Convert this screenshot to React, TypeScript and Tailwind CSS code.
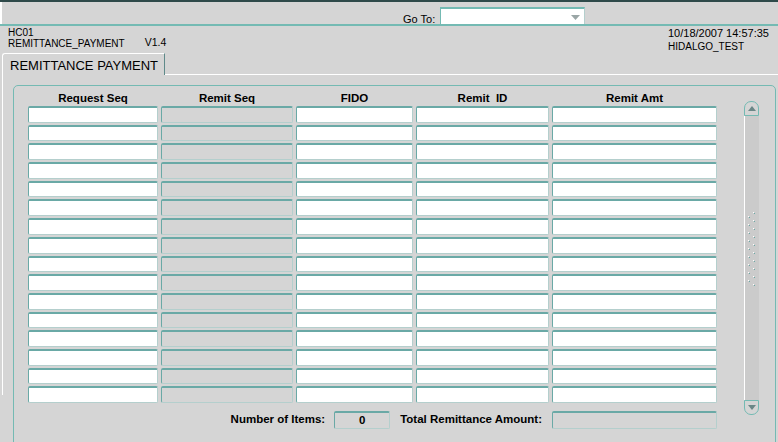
import React from "react";

// Colonnes du bloc
const cols = [
  { title: "Request Seq", w: "w-[130px]", gray: false },
  { title: "Remit Seq", w: "w-[132px]", gray: true },
  { title: "FIDO", w: "w-[117px]", gray: false },
  { title: "Remit  ID", w: "w-[133px]", gray: false },
  { title: "Remit Amt", w: "w-[165px]", gray: false },
];
const ROWS = 16;

const Field = ({ gray }: { gray?: boolean }) => (
  <div
    className={`h-full rounded-[2px] border border-[#b4cfcd] border-t-2 border-t-[#6aa9a6] border-l-[#6aa9a6] ${
      gray ? "bg-[#d5d5d5]" : "bg-white"
    }`}
  />
);

const Grip = () => (
  <svg width="12" height="76" viewBox="0 0 12 76">
    {Array.from({ length: 10 }).map((_, i) => (
      <g key={i}>
        <rect x="7" y={i * 8} width="1" height="1" fill="#ffffff" />
        <rect x="8" y={i * 8 + 1} width="1" height="1" fill="#6aa9a6" />
        <rect x="2" y={i * 8 + 4} width="1" height="1" fill="#ffffff" />
        <rect x="3" y={i * 8 + 5} width="1" height="1" fill="#6aa9a6" />
      </g>
    ))}
  </svg>
);

const ScrollBar = () => (
  <div className="mt-[9px] flex h-[314px] w-[15px] flex-col">
    <div className="flex h-[15px] items-center justify-center rounded-t-[7px] border border-[#74bab3]">
      <svg width="8" height="5" viewBox="0 0 8 5"><path d="M0 5 L4 0 L8 5 Z" fill="#6b8787" /></svg>
    </div>
    <div className="flex flex-1 items-start border-l border-white bg-[#cbcbcb] pl-[1px] pt-[96px]">
      <Grip />
    </div>
    <div className="flex h-[15px] items-center justify-center rounded-b-[7px] border border-[#74bab3]">
      <svg width="8" height="5" viewBox="0 0 8 5"><path d="M0 0 L8 0 L4 5 Z" fill="#6b8787" /></svg>
    </div>
  </div>
);

export default function App() {
  return (
    <div className="h-[442px] w-[778px] overflow-hidden bg-[#d5d5d5] text-black" style={{ fontFamily: '"Liberation Sans", Arial, sans-serif' }}>
      {/* barre du haut */}
      <div className="h-[2px] bg-[#2f4a4a]" />
      <div className="flex h-[22px] items-start overflow-hidden border-l-2 border-white">
        <span className="ml-[401px] mt-[11px] text-[11px] leading-[13px]">Go To:</span>
        <div className="ml-[5px] mt-[5px] flex h-[22px] w-[145px] justify-end border border-[#b4cfcd] border-t-2 border-t-[#74bab3] border-l-[#74bab3] bg-white pr-[4px] pt-[6px]">
          <svg width="9" height="5" viewBox="0 0 9 5"><path d="M0 0 L9 0 L4.5 5 Z" fill="#9aa6a6" /></svg>
        </div>
      </div>
      <div className="h-[2px] bg-[#74bab3]" />

      {/* entête */}
      <div className="flex h-[27px] text-[10px] leading-[11px]">
        <div className="ml-[8px] pt-[1px]">
          <div>HC01</div>
          <div>REMITTANCE_PAYMENT</div>
        </div>
        <div className="ml-[20px] pt-[11px] text-[10.5px]">V1.4</div>
        <div className="ml-auto mr-[8px] w-[102px] pt-[1px] leading-[13px]">
          <div className="text-[11px]">10/18/2007 14:57:35</div>
          <div>HIDALGO_TEST</div>
        </div>
      </div>

      {/* onglet */}
      <div className="flex h-[22px] items-end">
        <div className="ml-[2px] h-[22px] w-[163px] rounded-tl-[3px] border-l border-t border-r border-white border-r-[#5f8a8a] pl-[7px] pt-[2px] text-[13px] leading-[20px]">
          REMITTANCE PAYMENT
        </div>
        <div className="h-[2px] flex-1 border-b border-white" />
      </div>

      {/* page */}
      <div className="ml-[2px] h-[320px] border-l border-white pt-[10px] pl-[10px] pr-[2px]">
        <div className="h-[400px] rounded-t-[5px] border border-[#74bab3]">
          <div className="flex pl-[14px] pt-[6px]">
            <div className="flex flex-col">
              <div className="flex h-[14px] gap-[3px] text-[11.5px] font-bold leading-[13px]">
                {cols.map((c) => (
                  <div key={c.title} className={`${c.w} whitespace-pre text-center`}>{c.title}</div>
                ))}
              </div>
              <div className="flex h-[297px] gap-[3px]">
                {cols.map((c) => (
                  <div key={c.title} className={`${c.w} grid grid-rows-[repeat(16,minmax(0,1fr))] gap-y-[2px]`}>
                    {Array.from({ length: ROWS }).map((_, i) => (
                      <Field key={i} gray={c.gray} />
                    ))}
                  </div>
                ))}
              </div>
              <div className="mt-[8px] flex h-[18px] items-center justify-end text-[11.5px] font-bold">
                <span>Number of Items:</span>
                <div className="ml-[9px] flex h-[18px] w-[56px] items-center justify-center rounded-[2px] border border-[#b4cfcd] border-t-2 border-t-[#6aa9a6] border-l-[#6aa9a6] bg-[#d5d5d5]">0</div>
                <span className="ml-[10px]">Total Remittance Amount:</span>
                <div className="ml-[10px] h-[18px] w-[165px] rounded-[2px] border border-[#b4cfcd] border-t-2 border-t-[#6aa9a6] border-l-[#6aa9a6] bg-[#d5d5d5]" />
              </div>
            </div>
            <div className="ml-[27px]">
              <ScrollBar />
            </div>
          </div>
        </div>
      </div>
    </div>
  );
}
